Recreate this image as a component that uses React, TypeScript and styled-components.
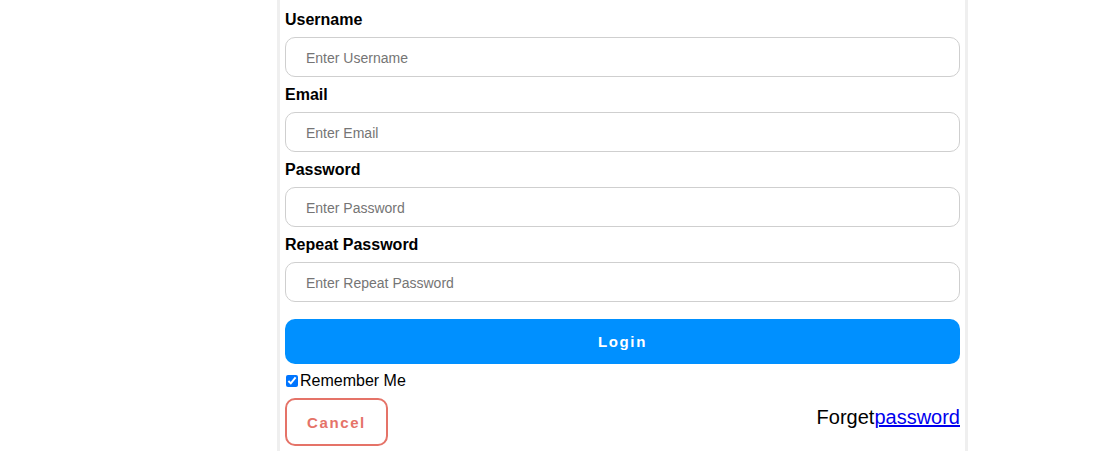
import React from 'react';
import styled, { createGlobalStyle } from 'styled-components';

const GlobalStyle = createGlobalStyle`
  body {
    margin: 0;
    background: #fff;
    font-family: "Liberation Sans", Arial, sans-serif;
  }
`;

const Page = styled.div`
  padding-left: 277px;
  height: 451px;
  overflow: hidden;
`;

const Card = styled.form`
  width: 675px;
  padding: 2px 5px 0;
  border-left: 3px solid #efefef;
  border-right: 3px solid #efefef;
  min-height: 460px;
`;

const Label = styled.label`
  display: block;
  margin: 9px 0 8px;
  font-size: 16px;
  line-height: 18px;
  font-weight: bold;
  color: #000;
`;

const Input = styled.input`
  display: block;
  box-sizing: border-box;
  width: 100%;
  height: 40px;
  padding: 1px 20px 0;
  border: 1px solid #cfcfcf;
  border-radius: 10px;
  font-family: "Liberation Sans", Arial, sans-serif;
  font-size: 14px;
  color: #333;
  outline: none;

  &::placeholder {
    color: #757575;
  }
`;

const LoginButton = styled.button`
  display: block;
  width: 100%;
  height: 45px;
  margin-top: 17px;
  border: none;
  border-radius: 10px;
  background: #0090ff;
  color: #fff;
  font-family: "Liberation Sans", Arial, sans-serif;
  font-size: 15px;
  font-weight: bold;
  letter-spacing: 1.6px;
  cursor: pointer;
`;

const RememberRow = styled.label`
  display: flex;
  align-items: center;
  margin-top: 8px;
  font-size: 16px;
  line-height: 18px;
  color: #000;

  input {
    width: 12px;
    height: 12px;
    margin: 0 2px 0 1px;
  }
`;

const BottomRow = styled.div`
  display: flex;
  justify-content: space-between;
  align-items: flex-start;
  margin-top: 8px;
`;

const CancelButton = styled.button`
  box-sizing: border-box;
  width: 103px;
  height: 48px;
  border: 2px solid #e57368;
  border-radius: 10px;
  background: #fff;
  color: #e57368;
  font-family: "Liberation Sans", Arial, sans-serif;
  font-size: 15px;
  font-weight: bold;
  letter-spacing: 1.6px;
  cursor: pointer;
`;

const Forget = styled.span`
  padding-top: 8px;
  font-size: 20px;
  line-height: 23px;
  color: #000;

  a {
    color: #0000ee;
    text-decoration: underline;
  }
`;

const fields = [
  { label: 'Username', placeholder: 'Enter Username', type: 'text' },
  { label: 'Email', placeholder: 'Enter Email', type: 'email' },
  { label: 'Password', placeholder: 'Enter Password', type: 'password' },
  { label: 'Repeat Password', placeholder: 'Enter Repeat Password', type: 'password' },
];

export default function App() {
  return (
    <>
      <GlobalStyle />
      <Page>
        <Card onSubmit={(e) => e.preventDefault()}>
          {fields.map((f) => (
            <div key={f.label}>
              <Label>{f.label}</Label>
              <Input type={f.type} placeholder={f.placeholder} />
            </div>
          ))}
          <LoginButton type="submit">Login</LoginButton>
          <RememberRow>
            <input type="checkbox" defaultChecked />
            Remember Me
          </RememberRow>
          <BottomRow>
            <CancelButton type="button">Cancel</CancelButton>
            <Forget>
              Forget<a href="#">password</a>
            </Forget>
          </BottomRow>
        </Card>
      </Page>
    </>
  );
}
